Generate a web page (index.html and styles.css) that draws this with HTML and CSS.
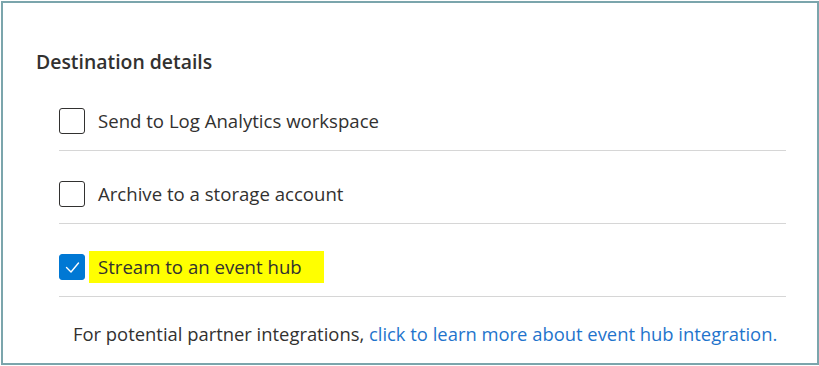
FILE: index.html
```html
<!DOCTYPE html>
<html>
<head>
  <meta charset="utf-8">
  <title>Destination details</title>
  <link rel="stylesheet" href="styles.css">
</head>
<body>
  <div class="frame">
    <div class="gutter">
      <span class="gutter-line"></span>
      <span class="gutter-line"></span>
      <span class="gutter-line"></span>
    </div>
    <div class="panel">
      <h2 class="panel-title">Destination details</h2>
      <ul class="options">
        <li class="option">
          <span class="checkbox"></span>
          <span class="option-label">Send to Log Analytics workspace</span>
        </li>
        <li class="option">
          <span class="checkbox"></span>
          <span class="option-label">Archive to a storage account</span>
        </li>
        <li class="option">
          <span class="checkbox checked">
            <svg width="26" height="26" viewBox="0 0 26 26"><path d="M7.5 13.5 L12 18 L19.5 9" fill="none" stroke="#fff" stroke-width="1.4" stroke-linecap="round" stroke-linejoin="round"/></svg>
          </span>
          <span class="option-label highlight">Stream to an event hub</span>
        </li>
      </ul>
      <p class="footer-note">For potential partner integrations, <a href="#">click to learn more about event hub integration.</a></p>
    </div>
  </div>
</body>
</html>
```

FILE: styles.css
```css
/* basic layout */
body {
  margin: 0;
  font-family: "Open Sans", "Noto Sans", sans-serif;
  color: #323130;
  background: #fff;
}

.frame {
  display: flex;
  box-sizing: border-box;
  width: 818px;
  height: 364px;
  margin: 1px 0 0 1px;
  border: 2px solid #7ba5ac;
  background: #fff;
}

/* leftover separators from the cropped side */
.gutter {
  display: flex;
  flex-direction: column;
  width: 17px;
  padding-top: 185px;
}

.gutter-line {
  display: block;
  height: 1px;
  margin-bottom: 73px;
  background-color: #ececec;
}

.panel {
  flex: 1;
  padding: 0 31px 0 16px;
}

.panel-title {
  margin: 46px 0 3px;
  font-size: 19.4px;
  font-weight: 600;
  line-height: 26px;
}

/* checkbox rows */
.options {
  list-style: none;
  margin: 0 0 0 23px;
  padding: 0;
}

.option {
  display: flex;
  align-items: center;
  padding: 30px 0 16px;
  border-bottom: 1px solid #d6d6d6;
}

.checkbox {
  display: block;
  box-sizing: border-box;
  width: 26px;
  height: 26px;
  border: 1px solid #323130;
  border-radius: 3px;
  flex-shrink: 0;
}

.checkbox.checked {
  background-color: #0078d4;
  border-color: #0078d4;
}

.checkbox svg {
  display: block;
  margin: -1px;
}

.option-label {
  margin-left: 13px;
  font-size: 18.6px;
  line-height: 26px;
}

.highlight {
  margin: -3px 0 -3px 4px;
  padding: 3px 22px 3px 9px;
  background-color: #ffff00;
}

.footer-note {
  margin: 25px 0 0 37px;
  font-size: 18.4px;
  line-height: 24px;
}

.footer-note a {
  color: #1f74cc;
  text-decoration: none;
}
```
